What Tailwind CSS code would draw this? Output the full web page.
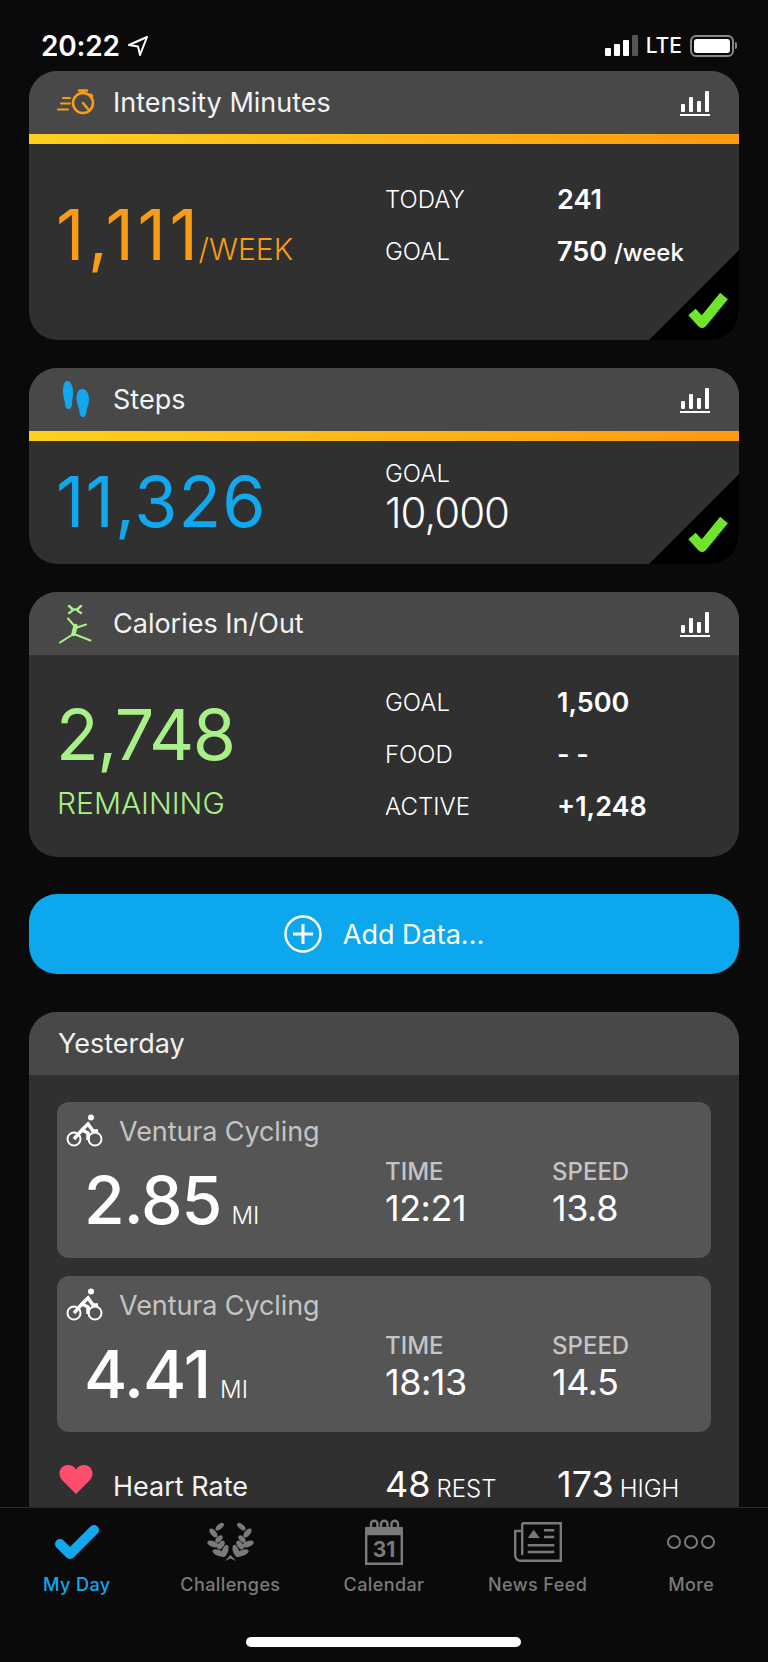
<!DOCTYPE html>
<html lang="en">
<head>
<meta charset="utf-8">
<script src="https://cdn.jsdelivr.net/npm/@tailwindcss/browser@4"></script>
<title>My Day</title>
</head>
<body class="bg-[#0a0a0a]">
<div class="relative flex flex-col w-[768px] h-[1662px] overflow-hidden bg-[#0a0a0a] text-white font-['Inter',sans-serif]">

  <!-- status bar -->
  <div class="h-[71px] shrink-0 flex items-center justify-between pl-[41px] pr-[31px] pt-[20px]">
    <div class="flex items-center gap-[7px]">
      <span class="text-[28px] leading-none font-semibold tracking-[-0.2px]">20:22</span>
      <svg width="22" height="22" viewBox="0 0 22 22" fill="none" stroke="white" stroke-width="2" stroke-linejoin="round"><path d="M20 2 2 10l9 1.500L13 20Z"/></svg>
    </div>
    <div class="flex items-center gap-[6px]">
      <div class="flex items-end gap-[3px] h-[21px]">
        <div class="w-[6px] h-[8px] rounded-[1px] bg-white"></div>
        <div class="w-[6px] h-[12px] rounded-[1px] bg-white"></div>
        <div class="w-[6px] h-[16px] rounded-[1px] bg-white"></div>
        <div class="w-[6px] h-[21px] rounded-[1px] bg-[#555]"></div>
      </div>
      <span class="text-[21px] leading-none font-medium ml-[2px]">LTE</span>
      <div class="ml-[2px] flex items-center">
        <div class="w-[44px] h-[22px] rounded-[6px] border-2 border-[#888] p-[2px]"><div class="w-full h-full rounded-[3px] bg-white"></div></div>
        <div class="w-[2px] h-[7px] rounded-r-[2px] bg-[#888] ml-[1px]"></div>
      </div>
    </div>
  </div>

  <!-- scrolling content -->
  <main class="flex-1 min-h-0 overflow-hidden px-[29px] flex flex-col">

    <!-- Intensity Minutes -->
    <section class="relative shrink-0 h-[269px] rounded-[28px] overflow-hidden bg-[#303030]">
      <header class="h-[63px] bg-[#484848] flex items-center justify-between pl-[28px] pr-[29px]">
        <div class="flex items-center gap-[18px]">
          <svg width="38" height="28" viewBox="0 0 38 28" fill="none" stroke="#fb9c16" stroke-width="2.500" stroke-linecap="round"><circle cx="26" cy="14" r="10"/><path d="M26 14l5 6M22 1.500h8M26 1.500V4M33.500 5.500l1.500 1.500"/><path d="M6 9h7M4 14.500h9M1 20.500h10" stroke-width="2"/></svg>
          <span class="text-[27px] leading-none text-[#f2f2f2]">Intensity Minutes</span>
        </div>
        <svg width="30" height="26" viewBox="0 0 30 26" fill="white"><rect x="1" y="14" width="4" height="8" rx="1"/><rect x="9" y="7" width="4" height="15" rx="1"/><rect x="17" y="11" width="4" height="11" rx="1"/><rect x="25" y="1" width="4" height="21" rx="1"/><rect x="0" y="24" width="30" height="2"/></svg>
      </header>
      <div class="h-[10px] bg-gradient-to-r from-[#fdd01f] to-[#ff9a10]"></div>
      <div class="flex pl-[27px] pt-[41px]">
        <div class="w-[329px] mt-[10px] flex items-baseline text-[#fb9c16]">
          <span class="text-[70px] leading-[80px] font-normal tracking-[3.500px]">1,111</span>
          <span class="text-[30px] font-light -ml-[3px]">/WEEK</span>
        </div>
        <dl class="flex flex-col gap-[22px]">
          <div class="flex items-center h-[30px]"><dt class="w-[172px] text-[24px] font-light">TODAY</dt><dd class="text-[27px] font-semibold">241</dd></div>
          <div class="flex items-center h-[30px]"><dt class="w-[172px] text-[24px] font-light">GOAL</dt><dd class="text-[27px] font-semibold">750 <span class="text-[24px] font-medium">/week</span></dd></div>
        </dl>
      </div>
      <svg class="absolute right-0 bottom-0" width="90" height="90" viewBox="0 0 90 90"><path d="M90 0V90H0Z" fill="#000"/><path d="M43 62l10 11 22-27" fill="none" stroke="#6fe52c" stroke-width="10" stroke-linejoin="round"/></svg>
    </section>

    <!-- Steps -->
    <section class="relative shrink-0 h-[196px] mt-[28px] rounded-[28px] overflow-hidden bg-[#303030]">
      <header class="h-[63px] bg-[#484848] flex items-center justify-between pl-[28px] pr-[29px]">
        <div class="flex items-center gap-[18px]">
          <svg width="38" height="38" viewBox="0 0 38 38" fill="#12a8ee"><path d="M10 0c4 0 6 5 6 12 0 4-1 7-1 11 0 3-1.500 5-3.500 5S8 26 8 23c0-4-2-7-2-12C6 5 7 0 10 0Z"/><path d="M25 8c4 0 7 4 7 10 0 5-2 8-2.500 12 0 4-1.500 6-3.500 6s-3.500-2-3.500-5c0-4-3-8-3-13 0-6 2-10 5.500-10Z"/></svg>
          <span class="text-[27px] leading-none text-[#f2f2f2]">Steps</span>
        </div>
        <svg width="30" height="26" viewBox="0 0 30 26" fill="white"><rect x="1" y="14" width="4" height="8" rx="1"/><rect x="9" y="7" width="4" height="15" rx="1"/><rect x="17" y="11" width="4" height="11" rx="1"/><rect x="25" y="1" width="4" height="21" rx="1"/><rect x="0" y="24" width="30" height="2"/></svg>
      </header>
      <div class="h-[10px] bg-gradient-to-r from-[#fdd01f] to-[#ff9a10]"></div>
      <div class="flex pl-[27px] pt-[19px]">
        <div class="w-[329px] mt-[2px] text-[#12a8ee] text-[70px] leading-[80px] font-normal tracking-[1px]">11,326</div>
        <div class="flex flex-col">
          <div class="text-[24px] leading-[28px] font-light">GOAL</div>
          <div class="text-[42px] leading-[50px] font-light tracking-[-1px]">10,000</div>
        </div>
      </div>
      <svg class="absolute right-0 bottom-0" width="90" height="90" viewBox="0 0 90 90"><path d="M90 0V90H0Z" fill="#000"/><path d="M43 62l10 11 22-27" fill="none" stroke="#6fe52c" stroke-width="10" stroke-linejoin="round"/></svg>
    </section>

    <!-- Calories -->
    <section class="shrink-0 h-[265px] mt-[28px] rounded-[28px] overflow-hidden bg-[#303030]">
      <header class="h-[63px] bg-[#484848] flex items-center justify-between pl-[28px] pr-[29px]">
        <div class="flex items-center gap-[18px]">
          <svg width="38" height="42" viewBox="0 0 38 42" fill="none" stroke="#a9f088" stroke-linecap="round"><path d="M12 3c2 1.500 3 2 3.500 3.500S14 9 12 10M24 3c-2 1.500-3 2-3.500 3.500S22 9 24 10M15 6.500h6" stroke-width="2.500"/><path d="M11 15.500l6.500 7.500M29 21.500l-9 3" stroke-width="2"/><path d="M18.500 23l-2 8" stroke-width="4.500"/><path d="M16.500 31 3 39.500M17 31l16.500 6.500" stroke-width="2"/></svg>
          <span class="text-[27px] leading-none text-[#f2f2f2]">Calories In/Out</span>
        </div>
        <svg width="30" height="26" viewBox="0 0 30 26" fill="white"><rect x="1" y="14" width="4" height="8" rx="1"/><rect x="9" y="7" width="4" height="15" rx="1"/><rect x="17" y="11" width="4" height="11" rx="1"/><rect x="25" y="1" width="4" height="21" rx="1"/><rect x="0" y="24" width="30" height="2"/></svg>
      </header>
      <div class="flex pl-[27px] pt-[33px]">
        <div class="w-[329px] mt-[7px] text-[#a9f088] flex flex-col">
          <span class="text-[70px] leading-[80px] font-normal tracking-[-1.500px]">2,748</span>
          <span class="text-[30px] leading-[34px] font-light mt-[11px] ml-[1px]">REMAINING</span>
        </div>
        <dl class="flex flex-col gap-[22px]">
          <div class="flex items-center h-[30px]"><dt class="w-[172px] text-[24px] font-light">GOAL</dt><dd class="text-[27px] font-semibold">1,500</dd></div>
          <div class="flex items-center h-[30px]"><dt class="w-[172px] text-[24px] font-light">FOOD</dt><dd class="text-[27px] font-semibold">- -</dd></div>
          <div class="flex items-center h-[30px]"><dt class="w-[172px] text-[24px] font-light">ACTIVE</dt><dd class="text-[27px] font-semibold">+1,248</dd></div>
        </dl>
      </div>
    </section>

    <!-- Add Data -->
    <button class="shrink-0 h-[80px] mt-[37px] rounded-[28px] bg-[#0da7ee] flex items-center justify-center gap-[21px]">
      <svg width="38" height="38" viewBox="0 0 38 38" fill="none" stroke="white" stroke-width="2.400"><circle cx="19" cy="19" r="17.500"/><path d="M19 9v20M9 19h20" stroke-width="3"/></svg>
      <span class="text-[27px] leading-none">Add Data...</span>
    </button>

    <!-- Yesterday -->
    <section class="shrink-0 h-[600px] mt-[38px] rounded-t-[28px] overflow-hidden bg-[#303030]">
      <header class="h-[63px] bg-[#484848] flex items-center pl-[29px]">
        <span class="text-[27px] leading-none text-[#f2f2f2]">Yesterday</span>
      </header>
      <div class="px-[28px] pt-[27px] flex flex-col gap-[18px]">

        <article class="h-[156px] rounded-[12px] bg-[#555] pt-[12px]">
          <div class="flex items-center pl-[9px] gap-[15px] h-[34px]">
            <svg width="38" height="34" viewBox="0 0 38 34" fill="none" stroke="white" stroke-width="2"><circle cx="8" cy="25" r="6.500"/><circle cx="29" cy="25" r="6.500"/><circle cx="25" cy="3.500" r="3" fill="white" stroke="none"/><path d="M8 25l8-9 6 3v7M16 16l6-6 5 7h5" stroke-width="3.500"/></svg>
            <span class="text-[27px] leading-none text-[#c4c4c4] tracking-[-0.1px]">Ventura Cycling</span>
          </div>
          <div class="flex mt-[10px]">
            <div class="w-[328px] pl-[27px] mt-[3px] flex items-baseline gap-[10px]">
              <span class="text-[66px] leading-[78px] font-medium tracking-[-1px]">2.85</span>
              <span class="text-[24px] font-light">MI</span>
            </div>
            <div class="w-[167px]"><div class="text-[24px] leading-[28px] font-medium text-[#c4c4c4]">TIME</div><div class="text-[36px] leading-[44px] tracking-[-0.5px]">12:21</div></div>
            <div><div class="text-[24px] leading-[28px] font-medium text-[#c4c4c4]">SPEED</div><div class="text-[36px] leading-[44px] tracking-[-0.5px]">13.8</div></div>
          </div>
        </article>

        <article class="h-[156px] rounded-[12px] bg-[#555] pt-[12px]">
          <div class="flex items-center pl-[9px] gap-[15px] h-[34px]">
            <svg width="38" height="34" viewBox="0 0 38 34" fill="none" stroke="white" stroke-width="2"><circle cx="8" cy="25" r="6.500"/><circle cx="29" cy="25" r="6.500"/><circle cx="25" cy="3.500" r="3" fill="white" stroke="none"/><path d="M8 25l8-9 6 3v7M16 16l6-6 5 7h5" stroke-width="3.500"/></svg>
            <span class="text-[27px] leading-none text-[#c4c4c4] tracking-[-0.1px]">Ventura Cycling</span>
          </div>
          <div class="flex mt-[10px]">
            <div class="w-[328px] pl-[27px] mt-[3px] flex items-baseline gap-[10px]">
              <span class="text-[66px] leading-[78px] font-medium tracking-[-1px]">4.41</span>
              <span class="text-[24px] font-light">MI</span>
            </div>
            <div class="w-[167px]"><div class="text-[24px] leading-[28px] font-medium text-[#c4c4c4]">TIME</div><div class="text-[36px] leading-[44px] tracking-[-0.5px]">18:13</div></div>
            <div><div class="text-[24px] leading-[28px] font-medium text-[#c4c4c4]">SPEED</div><div class="text-[36px] leading-[44px] tracking-[-0.5px]">14.5</div></div>
          </div>
        </article>

        <div class="flex items-center mt-[15px] -mx-[28px] pl-[30px]">
          <div class="w-[54px] flex pb-[14px]"><svg width="34" height="29" viewBox="0 0 34 29" fill="#fd4f6d"><path d="M17 29 3 15C-2 9 1 0 9 0c4 0 6.500 2 8 4.500C18.500 2 21 0 25 0c8 0 11 9 6 15Z"/></svg></div>
          <span class="w-[272px] text-[27px] leading-none text-[#f2f2f2]">Heart Rate</span>
          <div class="w-[172px] flex items-baseline gap-[6px]"><span class="text-[36px] leading-none font-normal">48</span><span class="text-[24px] font-light">REST</span></div>
          <div class="flex items-baseline gap-[6px]"><span class="text-[36px] leading-none font-normal">173</span><span class="text-[24px] font-light">HIGH</span></div>
        </div>
      </div>
    </section>
  </main>

  <!-- tab bar -->
  <nav class="shrink-0 h-[155px] border-t border-[#2a2a2a] bg-[#0a0a0a] grid grid-cols-5 text-[#7a7a7a]">
    <a class="flex flex-col items-center pt-[11px] text-[#12a8ee]">
      <div class="h-[46px] flex items-center"><svg width="44" height="34" viewBox="0 0 44 34" fill="none" stroke="#12a8ee" stroke-width="10" stroke-linecap="round" stroke-linejoin="round"><path d="M5 19l10 10L39 5"/></svg></div>
      <span class="mt-[8px] text-[18px] leading-[24px] font-medium tracking-[0.4px]">My Day</span>
    </a>
    <a class="flex flex-col items-center pt-[11px]">
      <div class="h-[46px] flex items-center"><svg width="47" height="40" viewBox="0 0 47 40" fill="#7a7a7a"><g><ellipse cx="0" cy="0" rx="5" ry="2.500" transform="translate(12.700 4.700) rotate(-40)"/><ellipse cx="0" cy="0" rx="5.500" ry="2.800" transform="translate(6.500 11) rotate(50)"/><ellipse cx="0" cy="0" rx="4.500" ry="2.500" transform="translate(12 17) rotate(-45)"/><ellipse cx="0" cy="0" rx="6" ry="3" transform="translate(6 22) rotate(20)"/><ellipse cx="0" cy="0" rx="5" ry="2.800" transform="translate(14 23) rotate(-55)"/><ellipse cx="0" cy="0" rx="7" ry="3" transform="translate(12 31) rotate(20)"/><ellipse cx="0" cy="0" rx="6.500" ry="3" transform="translate(18 29) rotate(-70)"/></g><g transform="translate(47 0) scale(-1 1)"><ellipse cx="0" cy="0" rx="5" ry="2.500" transform="translate(12.700 4.700) rotate(-40)"/><ellipse cx="0" cy="0" rx="5.500" ry="2.800" transform="translate(6.500 11) rotate(50)"/><ellipse cx="0" cy="0" rx="4.500" ry="2.500" transform="translate(12 17) rotate(-45)"/><ellipse cx="0" cy="0" rx="6" ry="3" transform="translate(6 22) rotate(20)"/><ellipse cx="0" cy="0" rx="5" ry="2.800" transform="translate(14 23) rotate(-55)"/><ellipse cx="0" cy="0" rx="7" ry="3" transform="translate(12 31) rotate(20)"/><ellipse cx="0" cy="0" rx="6.500" ry="3" transform="translate(18 29) rotate(-70)"/></g><path d="M18 39l5.500-6 5.500 6-5.500-2.500Z"/></svg></div>
      <span class="mt-[8px] text-[18px] leading-[24px] font-medium tracking-[0.4px]">Challenges</span>
    </a>
    <a class="flex flex-col items-center pt-[11px]">
      <div class="h-[46px] flex items-center"><svg width="38" height="46" viewBox="0 0 38 46" fill="none" stroke="#7a7a7a" stroke-width="2.400"><path d="M1.200 15h35.600v29.800H1.200Z"/><rect x="0" y="8" width="38" height="8" fill="#7a7a7a" stroke="none"/><path d="M6 9V5a3 3 0 0 1 6.500 0v4M16 9V5a3 3 0 0 1 6.500 0v4M26.500 9V5a3 3 0 0 1 6.500 0v4"/><text x="19" y="38" text-anchor="middle" font-size="21" font-weight="700" fill="#7a7a7a" stroke="none" font-family="Inter">31</text></svg></div>
      <span class="mt-[8px] text-[18px] leading-[24px] font-medium tracking-[0.4px]">Calendar</span>
    </a>
    <a class="flex flex-col items-center pt-[11px]">
      <div class="h-[46px] flex items-center"><svg width="48" height="40" viewBox="0 0 48 40" fill="none" stroke="#7a7a7a" stroke-width="2.400"><path d="M8.200 1.200h38.600v37.600H7a5.500 5.500 0 0 1-5.800-5.500V9h7M8.200 1.200V33"/><path d="M13.700 16l6-8.300 6 8.300Z" fill="#7a7a7a" stroke="none"/><path d="M30 8.300h10.300M30 15h10.300M13.700 23.300h26.600M13.700 30h26.600"/></svg></div>
      <span class="mt-[8px] text-[18px] leading-[24px] font-medium tracking-[0.4px]">News Feed</span>
    </a>
    <a class="flex flex-col items-center pt-[11px]">
      <div class="h-[46px] flex items-center"><svg width="48" height="16" viewBox="0 0 48 16" fill="none" stroke="#7a7a7a" stroke-width="2"><circle cx="7" cy="8" r="6"/><circle cx="24" cy="8" r="6"/><circle cx="41" cy="8" r="6"/></svg></div>
      <span class="mt-[8px] text-[18px] leading-[24px] font-medium tracking-[0.4px]">More</span>
    </a>
  </nav>

  <div class="absolute left-[246px] bottom-[15px] w-[275px] h-[10px] rounded-full bg-white"></div>
</div>
</body>
</html>
